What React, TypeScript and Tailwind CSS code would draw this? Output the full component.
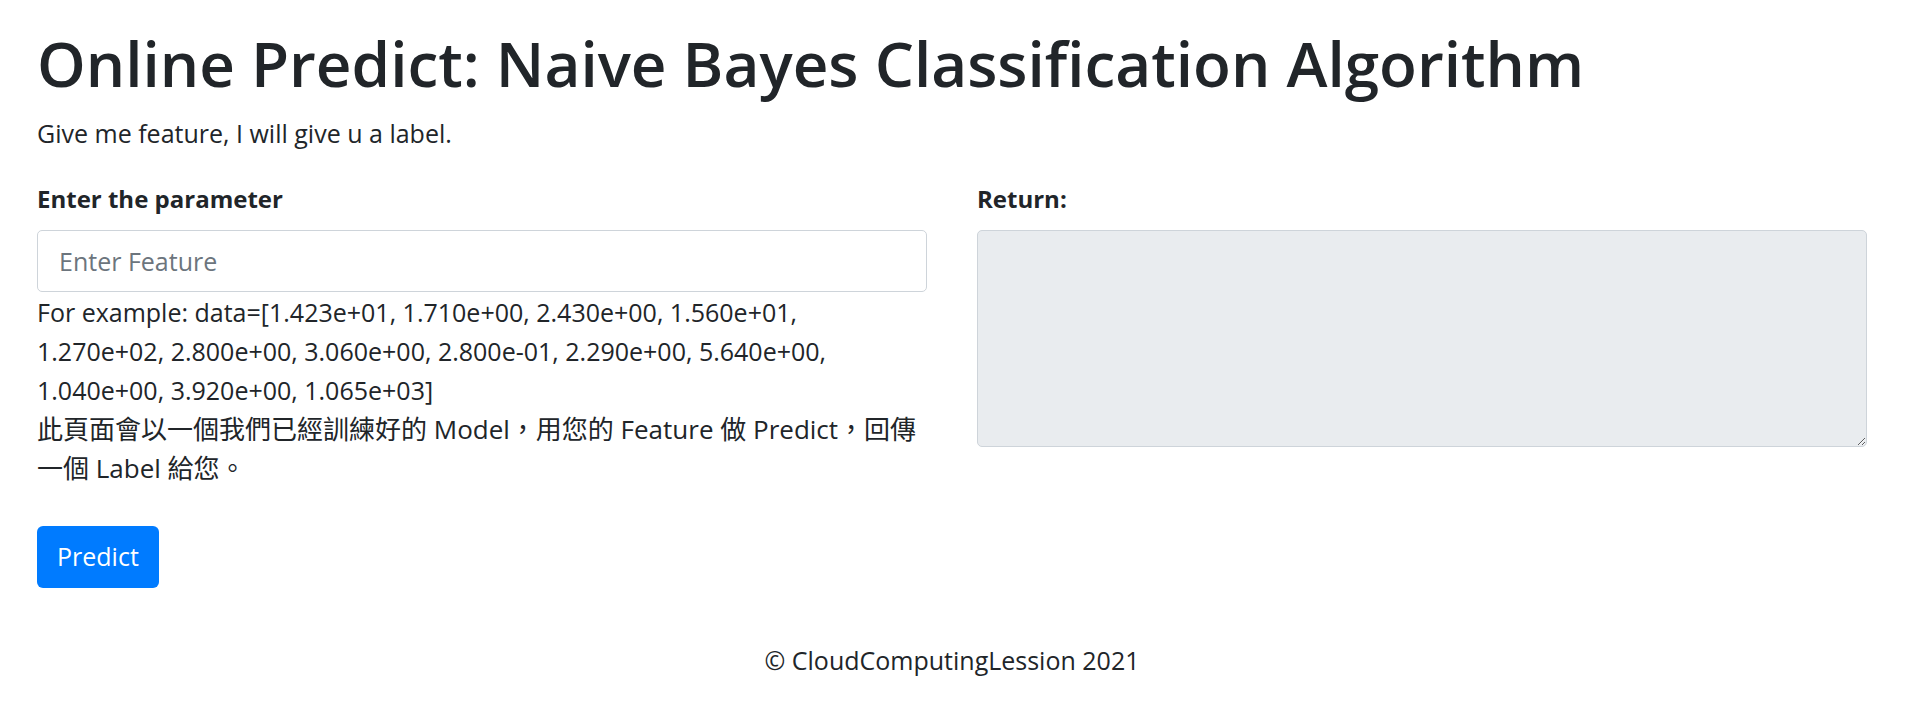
import React from "react";

export default function App() {
  return (
    <div
      className="min-h-screen bg-white pl-[37px] pr-[41px] text-[#212529]"
      style={{ fontFamily: '"Open Sans", "Noto Sans CJK TC", sans-serif' }}
    >
      <h1 className="mt-[21px] text-[62px] leading-[84px] font-semibold">
        Online Predict: Naive Bayes Classification Algorithm
      </h1>
      <p className="mt-[9px] text-[25px] leading-[39px]">Give me feature, I will give u a label.</p>

      <div className="mt-[26px] grid grid-cols-2 gap-[50px] text-[25px] leading-[39px]">
        <div>
          <label className="block text-[24px] font-bold">Enter the parameter</label>
          <input
            type="text"
            placeholder="Enter Feature"
            className="mt-[12px] block h-[62px] w-full rounded-[5px] border border-[#ced4da] px-[21px] text-[25px] placeholder:text-[#6c757d] focus:outline-none"
          />
          <p className="mt-[1px]">
            For example: data=[1.423e+01, 1.710e+00, 2.430e+00, 1.560e+01, 1.270e+02, 2.800e+00, 3.060e+00, 2.800e-01,
            2.290e+00, 5.640e+00, 1.040e+00, 3.920e+00, 1.065e+03]
          </p>
          <p className="text-[26px]">此頁面會以一個我們已經訓練好的 Model，用您的 Feature 做 Predict，回傳一個 Label 給您。</p>
        </div>
        <div>
          <label className="block text-[24px] font-bold">Return:</label>
          <textarea
            readOnly
            className="mt-[12px] block h-[217px] w-full rounded-[5px] border border-[#ced4da] bg-[#e9ecef] focus:outline-none"
          />
        </div>
      </div>

      <button className="mt-[38px] h-[62px] rounded-[6px] bg-[#007bff] px-[20px] text-[25px] text-white">
        Predict
      </button>

      <footer className="mt-[53px] text-center text-[25px] leading-[39px]">© CloudComputingLession 2021</footer>
    </div>
  );
}
